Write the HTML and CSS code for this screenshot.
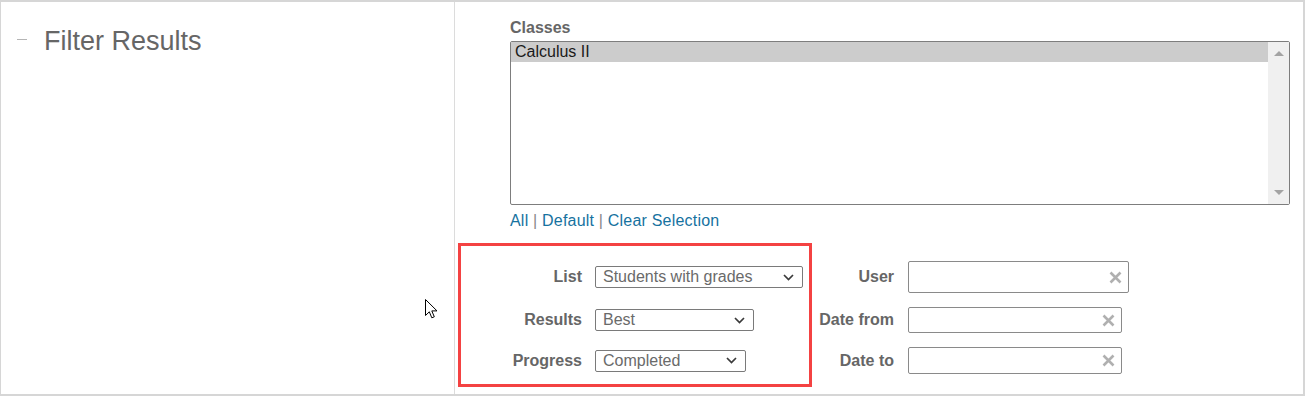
FILE: index.html
```html
<!DOCTYPE html>
<html lang="en">
<head>
    <meta charset="UTF-8">
    <title>Filter Results</title>
    <link rel="stylesheet" href="styles.css">
</head>
<body>
    <div class="panel">
        <div class="side">
            <h2 class="heading"><span class="dash"></span>Filter Results</h2>
        </div>

        <div class="main">
            <div class="field-label">Classes</div>
            <div class="listbox">
                <div class="items">
                    <div class="item selected">Calculus II</div>
                </div>
                <div class="scrollbar">
                    <span class="arrow up"></span>
                    <span class="arrow down"></span>
                </div>
            </div>
            <div class="links">
                <a href="#">All</a> <span class="sep">|</span> <a href="#">Default</a> <span class="sep">|</span> <a href="#">Clear Selection</a>
            </div>

            <div class="filters">
                <div class="group highlight">
                    <label>List</label>
                    <div class="select w-list">
                        <span>Students with grades</span>
                        <svg width="11" height="7" viewBox="0 0 11 7"><path d="M1 1 L5.5 5.5 L10 1" fill="none" stroke="#3a3a3a" stroke-width="1.7"/></svg>
                    </div>
                    <label>Results</label>
                    <div class="select w-results">
                        <span>Best</span>
                        <svg width="11" height="7" viewBox="0 0 11 7"><path d="M1 1 L5.5 5.5 L10 1" fill="none" stroke="#3a3a3a" stroke-width="1.7"/></svg>
                    </div>
                    <label>Progress</label>
                    <div class="select w-progress">
                        <span>Completed</span>
                        <svg width="11" height="7" viewBox="0 0 11 7"><path d="M1 1 L5.5 5.5 L10 1" fill="none" stroke="#3a3a3a" stroke-width="1.7"/></svg>
                    </div>
                </div>

                <div class="group plain">
                    <label>User</label>
                    <div class="input w-user">
                        <svg width="13" height="13" viewBox="0 0 13 13"><path d="M1.5 1.5 L11.5 11.5 M11.5 1.5 L1.5 11.5" stroke="#b0b0b0" stroke-width="2.6"/></svg>
                    </div>
                    <label>Date from</label>
                    <div class="input w-date">
                        <svg width="13" height="13" viewBox="0 0 13 13"><path d="M1.5 1.5 L11.5 11.5 M11.5 1.5 L1.5 11.5" stroke="#b0b0b0" stroke-width="2.6"/></svg>
                    </div>
                    <label>Date to</label>
                    <div class="input w-date">
                        <svg width="13" height="13" viewBox="0 0 13 13"><path d="M1.5 1.5 L11.5 11.5 M11.5 1.5 L1.5 11.5" stroke="#b0b0b0" stroke-width="2.6"/></svg>
                    </div>
                </div>
            </div>
        </div>

        <svg class="cursor" width="14" height="21" viewBox="0 0 14 21">
            <path d="M0.5 0.5 L0.5 16.5 L4.3 12.8 L6.8 18.8 L9.3 17.8 L6.8 11.9 L12 11.9 Z" fill="#fff" stroke="#000" stroke-width="1" stroke-linejoin="miter"/>
        </svg>
    </div>
</body>
</html>
```

FILE: styles.css
```css
body {
    margin: 0;
    font-family: "Liberation Sans", Arial, sans-serif;
    background: #fff;
}

.panel {
    position: relative;
    display: flex;
    width: 1305px;
    height: 396px;
    box-sizing: border-box;
    border: 2px solid #d6d6d6;
    border-left-width: 1px;
}

.side {
    width: 453px;
    padding: 23px 0 0 16px;
    box-sizing: border-box;
}

.heading {
    display: flex;
    align-items: center;
    margin: 0;
    font-size: 27px;
    font-weight: normal;
    line-height: 32px;
    color: #666;
}

.dash {
    width: 10px;
    height: 1px;
    margin: 0 17px 3px 0;
    background-color: #b5b5b5;
}

.main {
    flex: 1;
    border-left: 1px solid #dcdcdc;
    padding: 17px 13px 0 55px;
}

.field-label {
    font-size: 16px;
    font-weight: bold;
    line-height: 18px;
    color: #666;
    margin-bottom: 4px;
}

.listbox {
    display: flex;
    height: 164px;
    box-sizing: border-box;
    border: 1px solid #7d7d7d;
    border-radius: 2px;
}

.items {
    flex: 1;
}

.item {
    height: 20px;
    line-height: 20px;
    padding-left: 4px;
    font-size: 16px;
    color: #1a1a1a;
}

.item.selected {
    background-color: #cccccc;
}

.scrollbar {
    width: 21px;
    display: flex;
    flex-direction: column;
    justify-content: space-between;
    align-items: center;
    padding: 9px 0;
    background-color: #f0f0f0;
}

.arrow {
    width: 0;
    height: 0;
    border-left: 5px solid transparent;
    border-right: 5px solid transparent;
}

.arrow.up {
    border-bottom: 5px solid #a3a3a3;
}

.arrow.down {
    border-top: 5px solid #a3a3a3;
}

.links {
    margin-top: 7px;
    font-size: 16px;
    line-height: 18px;
    letter-spacing: 0.2px;
    color: #888;
}

.links a {
    color: #16729f;
    text-decoration: none;
}

.filters {
    display: flex;
    align-items: flex-start;
    margin: 13px 0 0 -52px;
}

.group {
    display: grid;
    grid-template-rows: 32px 26px 27px;
    row-gap: 14px;
    align-items: center;
}

.group label {
    font-size: 16px;
    font-weight: bold;
    color: #666;
    text-align: right;
}

.highlight {
    width: 354px;
    box-sizing: border-box;
    border: 3px solid #f44242;
    padding: 15px 0 10px;
    grid-template-columns: 121px auto;
    column-gap: 13px;
}

.plain {
    padding-top: 18px;
    grid-template-columns: 82px auto;
    column-gap: 14px;
}

.select {
    display: flex;
    align-items: center;
    justify-content: space-between;
    height: 22px;
    box-sizing: border-box;
    border: 1px solid #7a7a7a;
    border-radius: 2px;
    padding: 0 8px 0 7px;
    font-size: 16px;
    color: #6a6a6a;
}

.w-list { width: 208px; }
.w-results { width: 159px; }
.w-progress { width: 151px; }

.input {
    display: flex;
    align-items: center;
    justify-content: flex-end;
    height: 100%;
    box-sizing: border-box;
    border: 1px solid #8a8a8a;
    border-radius: 2px;
    padding-right: 6px;
}

.w-user { width: 221px; }
.w-date { width: 214px; }

.cursor {
    position: absolute;
    left: 424px;
    top: 297px;
}
```
